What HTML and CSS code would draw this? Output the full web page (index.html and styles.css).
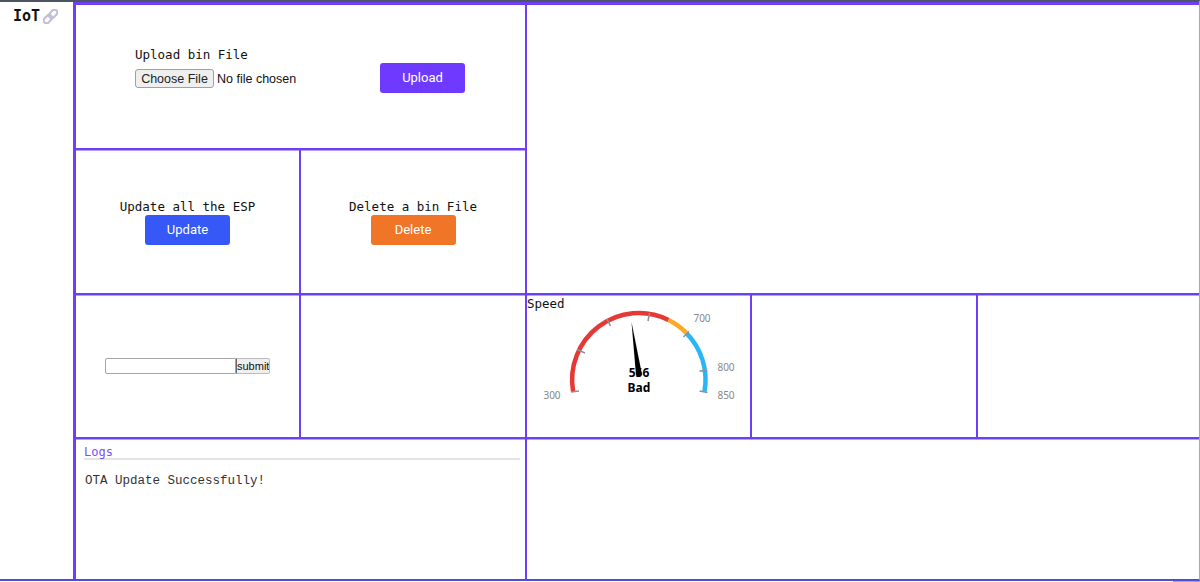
FILE: index.html
```html
<!DOCTYPE html>
<html lang="en">
<head>
<meta charset="utf-8">
<title>IoT</title>
<link rel="stylesheet" href="styles.css">
</head>
<body>
<div class="app">
  <aside class="sidebar">
    <span class="brand">IoT</span>
    <svg class="link-icon" width="15" height="15" viewBox="0 0 16 16" fill="none" stroke="#c4bdd8" stroke-width="2.300">
      <g transform="rotate(-45 8 8)">
        <rect x="-1" y="5" width="10" height="6" rx="3"/>
        <rect x="7" y="5" width="10" height="6" rx="3"/>
      </g>
    </svg>
  </aside>
  <main class="board">
    <section class="cell span-2 upload">
      <div class="upload-field">
        <label class="mono" for="bin">Upload bin File</label>
        <input class="file" id="bin" type="file">
      </div>
      <button class="btn btn-purple btn-upload" type="button">Upload</button>
    </section>
    <section class="cell span-3 rows-2 last"></section>
    <section class="cell stack">
      <div class="mono">Update all the ESP</div>
      <button class="btn btn-blue" type="button">Update</button>
    </section>
    <section class="cell stack">
      <div class="mono">Delete a bin File</div>
      <button class="btn btn-orange" type="button">Delete</button>
    </section>
    <section class="cell form-cell">
      <form class="mini-form">
        <input class="text-input" type="text"><input class="submit" type="button" value="submit">
      </form>
    </section>
    <section class="cell"></section>
    <section class="cell gauge-cell">
      <div class="mono gauge-title">Speed</div>
      <svg class="gauge" width="223" height="142" viewBox="527 295 223 142">
        <g fill="none" stroke-width="4.500">
          <path d="M573.100 391.500A66.800 66.800 0 0 1 668.500 320" stroke="#e53935"/>
          <path d="M668.500 320A66.800 66.800 0 0 1 686.200 332.800" stroke="#ffa726"/>
          <path d="M686.200 332.800A66.800 66.800 0 0 1 704.500 391.500" stroke="#29b6f6"/>
        </g>
        <g stroke="#909090" stroke-width="1.600">
          <path d="M571 392l8-1"/><path d="M577 349.500l8 3.500"/><path d="M607 319l3.500 7"/>
          <path d="M649.500 313l-1.500 8"/><path d="M689 331.500l-5.500 5.500"/><path d="M707.500 371h-8"/><path d="M707.500 392.500l-8-1.500"/>
        </g>
        <g class="gauge-scale">
          <text x="552" y="399" text-anchor="middle">300</text>
          <text x="702" y="322" text-anchor="middle">700</text>
          <text x="726" y="371" text-anchor="middle">800</text>
          <text x="726" y="399" text-anchor="middle">850</text>
        </g>
        <text class="gauge-value" x="639" y="377" text-anchor="middle">556</text>
        <text class="gauge-label" x="639" y="392" text-anchor="middle">Bad</text>
        <path d="M631.500 322L642 374.500 636 375z" fill="#000"/>
        <circle cx="639" cy="374" r="2.500" fill="#000"/>
      </svg>
    </section>
    <section class="cell"></section>
    <section class="cell last"></section>
    <section class="cell bottom span-2 logs">
      <div class="logs-title">Logs</div>
      <pre class="logs-body">OTA Update Successfully!</pre>
    </section>
    <section class="cell bottom span-3 last"></section>
  </main>
  <div class="scroll-thumb"></div>
</div>
</body>
</html>
```
FILE: styles.css
```css
* { box-sizing: border-box; }
html, body { height: 100%; }
body {
  margin: 0;
  background: #fff;
  overflow: hidden;
  font-family: "Liberation Sans", Arial, sans-serif;
}
.app {
  position: relative;
  display: grid;
  grid-template-columns: 73px 1fr;
  height: 581px;
  border-top: 2px solid #4d5563;
  border-right: 1px solid #a9a9b4;
  border-bottom: 2px solid #4a4fd8;
}
.scroll-thumb {
  position: absolute;
  right: -1px;
  bottom: -3px;
  width: 27px;
  height: 1px;
  background: #a9a9b4;
}
.sidebar {
  display: flex;
  align-items: flex-start;
  gap: 3px;
  padding: 6px 0 0 13px;
}
.brand {
  font: bold 15px/17px "DejaVu Sans Mono", monospace;
  color: #111;
}
.link-icon { flex: none; margin-top: 1px; }
.board {
  display: grid;
  grid-template-columns: 225px 226px 225px 226px 1fr;
  grid-template-rows: 145px 145px 144px 1fr;
  border-style: solid;
  border-color: #6e3ff8;
  border-width: 3px 0 0 3px;
  min-width: 0;
  min-height: 0;
}
.cell {
  border-right: 2px solid #6e3ff8;
  border-bottom: 2px solid #6e3ff8;
  box-shadow: 0 1px 0 #b5a0fb;
  min-width: 0;
  min-height: 0;
}
.last { border-right: 0; }
.bottom { border-bottom: 0; box-shadow: none; }
.span-2 { grid-column: span 2; }
.span-3 { grid-column: span 3; }
.rows-2 { grid-row: span 2; }
.mono {
  font: 12.500px/16px "DejaVu Sans Mono", monospace;
  color: #111;
}
.upload {
  display: flex;
  justify-content: space-between;
  align-items: center;
  padding: 0 60px 0 59px;
}
.upload-field { display: flex; flex-direction: column; gap: 6px; margin-bottom: 18px; }
.file { font: 12.500px "Liberation Sans", Arial, sans-serif; width: 190px; color: #111; }
.file::file-selector-button {
  width: 79px;
  height: 19px;
  padding: 0;
  margin-right: 3px;
  border: 1px solid #a0a0a0;
  border-radius: 3px;
  background: #efefef;
  color: #222;
  font: inherit;
}
.btn {
  width: 85px;
  height: 30px;
  padding: 0 0 2px;
  border: 0;
  border-radius: 3px;
  color: #fff;
  font: 13px Roboto, sans-serif;
}
.btn-upload { margin-top: 3px; }
.btn-purple { background: #6f3aff; }
.btn-blue { background: #3558f6; }
.btn-orange { background: #f07527; }
.stack {
  display: flex;
  flex-direction: column;
  justify-content: center;
  align-items: center;
  padding-top: 1px;
}
.form-cell {
  display: flex;
  justify-content: center;
  align-items: center;
}
.mini-form { display: flex; }
.text-input {
  width: 131px;
  height: 16px;
  padding: 0 2px;
  border: 1px solid #a5a5a5;
  border-radius: 2px 0 0 2px;
}
.submit {
  width: 34px;
  height: 16px;
  padding: 0;
  border: 1px solid #bbb;
  border-left-color: #666;
  border-radius: 0 2px 2px 0;
  background: #efefef;
  color: #111;
  font: 11px "Liberation Sans", Arial, sans-serif;
}
.gauge-cell { position: relative; }
.gauge-title { padding-top: 1px; }
.gauge { position: absolute; left: 0; top: 0; }
.gauge-scale text { font: 10px "Noto Sans", sans-serif; fill: #888; }
.gauge-value { font: bold 12px "Noto Sans", sans-serif; fill: #000; }
.gauge-label { font: bold 12px "Noto Sans", sans-serif; fill: #000; }
.logs { padding: 7px 5px 0 8px; }
.logs-title {
  font: 12px/12px "DejaVu Sans Mono", monospace;
  color: #7a4dff;
  border-bottom: 2px solid #e4e4e4;
}
.logs-body {
  margin: 13px 0 0 1px;
  font: 12.500px/16px "Liberation Mono", monospace;
  color: #333;
}
```
